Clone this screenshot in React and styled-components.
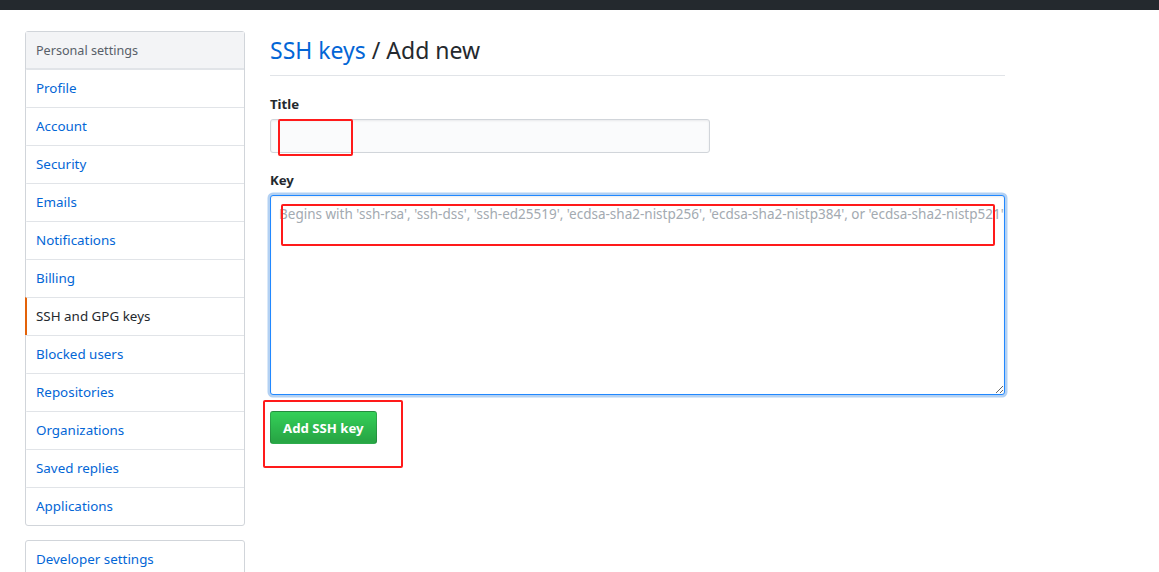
import React from 'react';
import styled, { createGlobalStyle } from 'styled-components';

const GlobalStyle = createGlobalStyle`
  body {
    margin: 0;
    background: #fff;
    font-family: "Noto Sans", "Open Sans", sans-serif;
    font-size: 14px;
    color: #24292e;
  }
`;

const TopBar = styled.div`
  height: 10px;
  background: #24292e;
`;

const Page = styled.div`
  position: relative;
  display: flex;
  gap: 25px;
  padding: 21px 0 0 25px;
`;

const Sidebar = styled.div`
  width: 220px;
  display: flex;
  flex-direction: column;
  gap: 14px;
`;

const Menu = styled.nav`
  border: 1px solid #d1d5da;
  border-radius: 3px;
  background: #fff;
`;

const MenuHeading = styled.div`
  height: 36px;
  display: flex;
  align-items: center;
  padding: 0 10px;
  background: #f3f4f6;
  border-bottom: 1px solid #e1e4e8;
  color: #586069;
  font-size: 12.6px;
`;

const MenuItem = styled.a`
  box-sizing: border-box;
  height: 38px;
  display: flex;
  align-items: center;
  padding: 0 9px 2px;
  border-top: ${(p) => (p.$first ? 'none' : '1px solid #e1e4e8')};
  border-left: 2px solid ${(p) => (p.$active ? '#e36209' : 'transparent')};
  margin-left: -1px;
  color: ${(p) => (p.$active ? '#24292e' : '#0366d6')};
  text-decoration: none;
  font-size: 13.4px;
`;

const Main = styled.main`
  width: 735px;
`;

const Heading = styled.h2`
  margin: 0;
  padding-bottom: 6px;
  border-bottom: 1px solid #e1e4e8;
  font-size: 23px;
  font-weight: 400;
  line-height: 38px;
  color: #24292e;
`;

const Crumb = styled.a`
  color: #0366d6;
  text-decoration: none;
`;

const Field = styled.div`
  margin-top: ${(p) => p.$top}px;
`;

const Label = styled.label`
  display: block;
  font-size: 13.2px;
  font-weight: 700;
  line-height: 20px;
  margin-bottom: 5px;
`;

const TextInput = styled.input`
  box-sizing: border-box;
  width: 440px;
  height: 34px;
  padding: 6px 8px;
  border: 1px solid #d1d5da;
  border-radius: 3px;
  background: #fafbfc;
  box-shadow: inset 0 1px 2px rgba(27, 31, 35, 0.075);
  font: inherit;
  outline: none;
`;

const KeyArea = styled.textarea`
  box-sizing: border-box;
  display: block;
  width: 735px;
  height: 200px;
  padding: 8px 8px;
  border: 1px solid #2188ff;
  border-radius: 3px;
  background: #fff;
  box-shadow: inset 0 1px 2px rgba(27, 31, 35, 0.075), 0 0 0 2.5px rgba(3, 102, 214, 0.3);
  font-family: "Noto Sans", "Open Sans", sans-serif;
  font-size: 13.5px;
  line-height: 20px;
  outline: none;
  resize: vertical;
  overflow: hidden;
  white-space: pre;
  &::placeholder {
    color: #a3aab1;
    white-space: pre;
  }
`;

const Button = styled.button`
  margin-top: 16px;
  height: 33px;
  padding: 0 12px;
  border: 1px solid rgba(27, 31, 35, 0.2);
  border-radius: 3px;
  background-image: linear-gradient(-180deg, #34d058 0%, #28a745 90%);
  color: #fff;
  font-family: "Noto Sans", "Open Sans", sans-serif;
  font-size: 13.2px;
  font-weight: 700;
`;

const Mark = styled.div`
  position: absolute;
  border: 2px solid #ff1a1a;
  border-radius: 2px;
  pointer-events: none;
`;

const items = [
  'Profile',
  'Account',
  'Security',
  'Emails',
  'Notifications',
  'Billing',
  'SSH and GPG keys',
  'Blocked users',
  'Repositories',
  'Organizations',
  'Saved replies',
  'Applications',
];

const marks = [
  { left: 278, top: 109, width: 71, height: 33 },
  { left: 281, top: 194, width: 710, height: 38 },
  { left: 263, top: 390, width: 136, height: 64 },
];

export default function App() {
  return (
    <>
      <GlobalStyle />
      <TopBar />
      <Page>
        <Sidebar>
          <Menu>
            <MenuHeading>Personal settings</MenuHeading>
            {items.map((item) => (
              <MenuItem key={item} href="#" $first={false} $active={item === 'SSH and GPG keys'}>
                {item}
              </MenuItem>
            ))}
          </Menu>
          <Menu>
            <MenuItem href="#" $first>Developer settings</MenuItem>
          </Menu>
        </Sidebar>
        <Main>
          <Heading>
            <Crumb href="#">SSH keys</Crumb> / Add new
          </Heading>
          <Field $top={18}>
            <Label>Title</Label>
            <TextInput type="text" />
          </Field>
          <Field $top={17}>
            <Label>Key</Label>
            <KeyArea
              wrap="off"
              placeholder="Begins with 'ssh-rsa', 'ssh-dss', 'ssh-ed25519', 'ecdsa-sha2-nistp256', 'ecdsa-sha2-nistp384', or 'ecdsa-sha2-nistp521'"
            />
          </Field>
          <Button>Add SSH key</Button>
        </Main>
        {marks.map((m, i) => (
          <Mark key={i} style={m} />
        ))}
      </Page>
    </>
  );
}
